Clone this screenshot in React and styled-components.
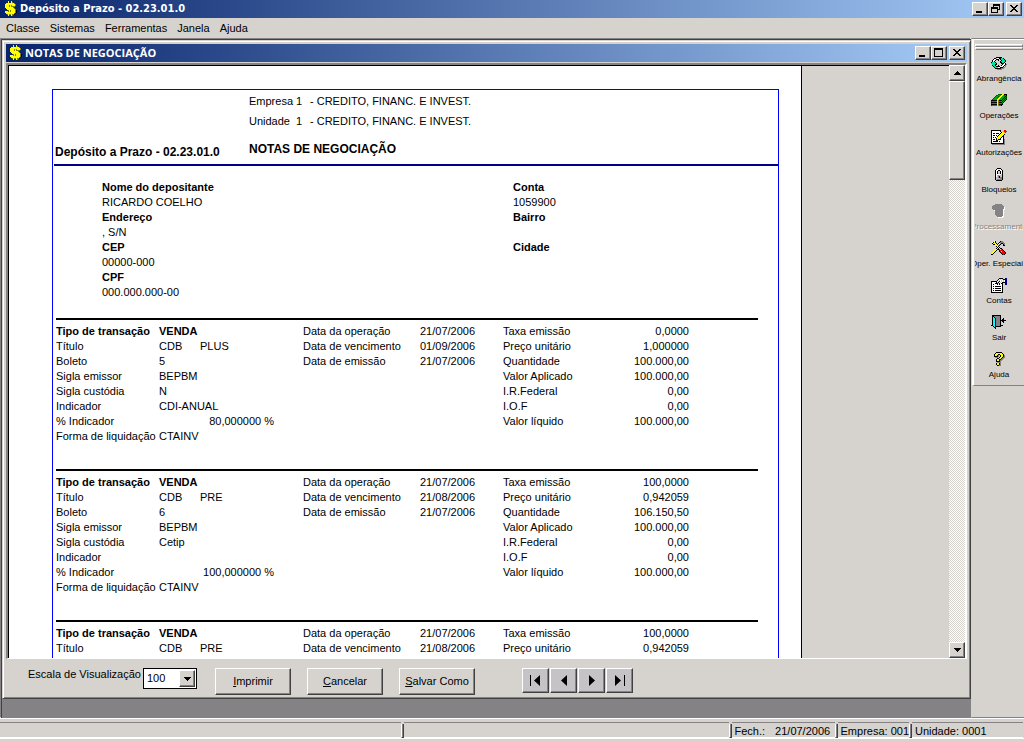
import React from "react";
import styled, { createGlobalStyle, css } from "styled-components";

const face = "#d6d3ce";
const shade = "#848284";
const dark = "#424142";

const GlobalStyle = createGlobalStyle`
  * { box-sizing: border-box; }
  body {
    margin: 0;
    background: ${face};
    color: #000;
    font: 11px/15px "Liberation Sans", Arial, sans-serif;
  }
  button, select { font: inherit; color: inherit; border-radius: 0; }
`;

const raised = css`
  background: ${face};
  border: 1px solid;
  border-color: #fff ${dark} ${dark} #fff;
  box-shadow: inset -1px -1px 0 ${shade};
`;

/* ---------- pixel drawings ---------- */

const palette = {
  K: "#000000", W: "#ffffff", Y: "#ffff00", y: "#848200", G: "#00a810",
  g: "#006100", C: "#00e3a6", c: "#00ffff", S: "#848284", s: "#c6c3c6",
  R: "#ff0000", B: "#000084", O: "#ffa030",
};

const drawings = {
  dollar: [
    "....Y..Y........",
    "....Y..Yy.......",
    "..YYYYYYYYy.....",
    ".YYYYYYYYYYy....",
    ".YYYYyYyYYYy....",
    ".YYYYyYyyyy.....",
    ".YYYYYYYYy......",
    "..YYYYYYYYy.....",
    "...YYYYYYYYy....",
    "....yYyYYYYyK...",
    ".YYYyYyYYYYyK...",
    ".YYYYYYYYYYyK...",
    "..YYYYYYYYyK....",
    "...yYyyYyyK.....",
    "....Y..Yy.......",
    "................",
  ],
  cycle: [
    "................",
    "................",
    ".....KKKKKK.....",
    "...KKsWWKKCCK...",
    "..KWWKKK.KCCCK..",
    ".KWWK..K..KCCCK.",
    ".KWK.....KCCCCK.",
    "KCCCK....KKCCK..",
    "CCCCCK....KKKWK.",
    ".CCCKK.....KWWKS",
    ".KCCK..K..KWWKS.",
    "..KCCKKKKWWWK.S.",
    "...KCCCWWKKKSS..",
    "....KKKKKKSSS...",
    "......SSSSS.....",
    "................",
  ],
  money: [
    "................",
    "................",
    ".......ggggYYKKK",
    ".....ggGGGYYGgGK",
    "....gGGgGYYGGGKg",
    "...gGGgGYYGGGKGK",
    "..gGGGGYYGGGKGKg",
    ".gGGGGYYGGGKGKGK",
    "KKKKKKYyKKKGKGK.",
    "gGGGGGYyGGGKGK..",
    "KKKKKKYyKKKGK...",
    "gGGGGGYyGGGK....",
    "KKKKKKYyKKKK....",
    "gGGGGGYyGGK.....",
    "................",
    "................",
  ],
  note: [
    "................",
    "KKKKKKKKKK...RR.",
    "KWWWWWWWWK..ORRR",
    "KWWWWWWWWWKYYOR.",
    "KWKKWKKKWKYYYY..",
    "KWWWWWWWKYYYYK..",
    "KWKKWKWKYYYYK...",
    "KWWWWWKYYYYKK...",
    "KWKWKWYYYYKWK...",
    "KWWWWKYYYKWWK...",
    "KWKKWKYKKKWWKS..",
    "KWWWWKKWWWWWKS..",
    "KWKKKKKWKWWWKS..",
    "KWWWWWWWWWWWKS..",
    "KKKKKKKKKKKKKS..",
    ".SSSSSSSSSSSSS..",
  ],
  lock: [
    "................",
    "................",
    "......KKKK......",
    ".....KWWWWK.....",
    "....KWWKKWWK....",
    "....KWK..KWK....",
    "....KWK..KWK....",
    "....KWKssKWK....",
    "....KWWWWWsK....",
    "....KWsSsssK....",
    "....KWsSKssK....",
    "....KssSKSSK....",
    "....KssssSSK....",
    "....KsSSSSSK....",
    ".....KKKKKK.....",
    "................",
  ],
  process: [
    "................",
    "....SSSSSSS.....",
    "..SSSSSSSSSS....",
    ".SSSSSSSSSSSS...",
    ".SSSSSSSSSSSSW..",
    ".SSSSSSSSSSSSW..",
    "..SSSSSSSSSSWW..",
    "...WSSSSSSSSW...",
    "....SSSSSSSSW...",
    "....SSSSSSSSW...",
    "....SSSSSSSSW...",
    "....SSSSSSSSW...",
    ".....SSSSSSSW...",
    "......SSSSSWW...",
    ".......WWWWW....",
    "................",
  ],
  tools: [
    "................",
    "...WK....KSS....",
    ".WKYK...KSSSS...",
    ".KYYYK.KWSKKSS..",
    "..KKYYKWSK..KS..",
    "....YYYSK...KK..",
    ".....KYK........",
    "......KYK.......",
    ".....KYKYKK.....",
    "....YYKKRYRK....",
    "...YYK..KRRRK...",
    "..YYK...KRYRRK..",
    ".YYK.....KRRRRK.",
    ".YK.......KRRRK.",
    "KK.........KRK..",
    "................",
  ],
  account: [
    "................",
    "........KKKK..BB",
    ".......KWsWsKKBB",
    "......KWsWsWsWBB",
    "KKKKKKWsKWsWsWBB",
    "KWWWWKsKWsWKKKBB",
    "KWWWKKKsKWKK..BB",
    "KWKWWWKWKWWK..BB",
    "KWWWWWWWWWWK....",
    "KWKWKKKKKKWK....",
    "KWWWWWWWWWWK....",
    "KWKWKKKKKKWK....",
    "KWWWWWWWWWWK....",
    "KWKWKKKKKKWK....",
    "KWWWWWWWWWWK....",
    "KKKKKKKKKKKK....",
  ],
  exit: [
    "................",
    ".KKKKKKKKK......",
    ".KKSSSSSSK......",
    ".KcKSSSSSK......",
    ".KccKSSSSK..K...",
    ".KccKSSSSK.KK...",
    ".KccKSSSSKKKKKK.",
    ".KccKSSSSK.KK...",
    ".KccKSSSSK..K...",
    ".KccKSSSSK......",
    ".KccKSSSSK......",
    "KKccKSSSSKKK....",
    "..KcKKKKKK......",
    "...KK...........",
    "....K...........",
    "................",
  ],
  help: [
    "................",
    ".....KKKKKK.....",
    "....KYYYYYYK....",
    "...KYYYKKYYYK...",
    "...KYYKS.KYYKS..",
    "...KKKKS.KYYKS..",
    "....SSS.KYYKSS..",
    "......KKYYKSS...",
    ".....KYYKKSS....",
    ".....KYYKSS.....",
    ".....KKKKS......",
    "......SSSS......",
    ".....KYYKS......",
    ".....KYYKS......",
    "......KKSS......",
    "................",
  ],
};

const PixelSvg = styled.svg`
  display: block;
  flex: none;
  width: 16px;
  height: 16px;
  shape-rendering: crispEdges;
`;

function PixelIcon({ name }) {
  return (
    <PixelSvg viewBox="0 0 16 16" aria-hidden="true">
      {drawings[name].flatMap((row, y) =>
        [...row.matchAll(/([A-Za-z])\1*/g)].map((run) => (
          <rect
            key={`${y}-${run.index}`}
            x={run.index}
            y={y}
            width={run[0].length}
            height="1"
            fill={palette[run[1]]}
          />
        ))
      )}
    </PixelSvg>
  );
}

/* ---------- frame of the application ---------- */

const Desktop = styled.div`
  display: flex;
  flex-direction: column;
  height: 100vh;
  overflow: hidden;
`;

const TitleBar = styled.header`
  display: flex;
  align-items: center;
  flex: none;
  height: 18px;
  padding: 0 2px 0 ${(p) => (p.$inner ? 3 : 4)}px;
  background: linear-gradient(90deg, #08246b, #a5cbf7);
`;

const Caption = styled.h1`
  flex: 1;
  margin: 0;
  color: #fff;
  font: bold 11px/18px ${(p) => (p.$inner ? '"Open Sans"' : '"DejaVu Sans Condensed"')}, sans-serif;
  white-space: nowrap;
`;

const CaptionButton = styled.button`
  ${raised}
  display: block;
  width: 16px;
  height: 14px;
  padding: 0;
  margin-left: ${(p) => (p.$apart ? 2 : 0)}px;
`;

const Glyph = styled.svg`
  display: block;
  width: 14px;
  height: 12px;
  fill: none;
  stroke: #000;
  shape-rendering: crispEdges;
`;

function CaptionButtons({ restore }) {
  return (
    <>
      <CaptionButton aria-label="Minimizar">
        <Glyph viewBox="0 0 14 12"><path d="M3 9h6" strokeWidth="2" /></Glyph>
      </CaptionButton>
      <CaptionButton aria-label={restore ? "Restaurar" : "Maximizar"}>
        <Glyph viewBox="0 0 14 12">
          {restore ? (
            <path d="M4.5 4V1.5h6v5H9M4 2h7M2.5 4.500h6v5h-6zM2 5h7" />
          ) : (
            <path d="M2.500 1.500h8v8h-8zM2 2.500h9" />
          )}
        </Glyph>
      </CaptionButton>
      <CaptionButton $apart aria-label="Fechar">
        <Glyph viewBox="0 0 14 12">
          <path d="M3 2h2v1h1v1h2v-1h1v-1h2v1h-1v1h-1v1h-1v1h1v1h1v1h1v1h-2v-1h-1v-1h-2v1h-1v1h-2v-1h1v-1h1v-1h1v-1h-1v-1h-1v-1h-1z" fill="#000" stroke="none" />
        </Glyph>
      </CaptionButton>
    </>
  );
}

const MenuBar = styled.nav`
  display: flex;
  flex: none;
  gap: 10px;
  height: 20px;
  padding-left: 6px;
`;

const MenuItem = styled.button`
  padding: 0;
  border: 0;
  background: none;
  line-height: 20px;
`;

const Middle = styled.div`
  display: flex;
  flex: 1;
  min-height: 0;
`;

const Workspace = styled.main`
  display: flex;
  flex: 1;
  min-width: 0;
  padding-bottom: 19px;
  background: ${shade};
  border: solid ${dark};
  border-width: 1px 0 0 1px;
  box-shadow: -1px -1px 0 ${shade};
  margin: 1px 0 0 1px;
`;

const ChildWindow = styled.section`
  display: flex;
  flex: 1;
  flex-direction: column;
  min-width: 0;
  padding: 2px;
  background: ${face};
  border: 1px solid;
  border-color: ${face} ${dark} ${dark} ${face};
  box-shadow: inset 1px 1px 0 #fff, inset -1px -1px 0 ${shade};
`;

const WindowBody = styled.div`
  display: flex;
  flex: 1;
  flex-direction: column;
  min-height: 0;
  padding: 1px 1px 0;
`;

const Viewer = styled.div`
  display: flex;
  flex: 1;
  min-height: 0;
  margin-top: 1px;
  border: 2px solid;
  border-color: ${shade} #fff #fff ${shade};
  border-bottom-width: 1px;
`;

const PageArea = styled.div`
  flex: 1;
  min-width: 0;
  overflow: hidden;
  border: solid #000;
  border-width: 1px 0 0 1px;
`;

/* ---------- scroll bar ---------- */

const ScrollBar = styled.div`
  display: flex;
  flex: none;
  flex-direction: column;
  width: 16px;
  background: repeating-conic-gradient(#fff 0 25%, ${face} 0 50%) 0 0 / 2px 2px;
`;

const ScrollButton = styled.button`
  ${raised}
  flex: none;
  width: 16px;
  height: 16px;
  padding: 0;
  svg { display: block; margin: auto; }
`;

const Thumb = styled.div`
  ${raised}
  flex: none;
  height: 99px;
`;

const Spring = styled.div`
  flex: 1;
`;

const Triangle = ({ up }) => (
  <svg width="7" height="4" shapeRendering="crispEdges" aria-hidden="true">
    <path d={up ? "M3 0h1v1h1v1h1v1h1v1H0V3h1V2h1V1h1z" : "M0 0h7v1H6v1H5v1H4v1H3V3H2V2H1V1H0z"} />
  </svg>
);

/* ---------- report ---------- */

const Paper = styled.article`
  width: 793px;
  padding: 23px 22px 0 43px;
  background: #fff;
  border-right: 1px solid #000;
`;

const Frame = styled.div`
  min-height: 900px;
  border: 1px solid #0000ff;
`;

const ReportHeader = styled.header`
  display: grid;
  grid-template-columns: 194px 1fr;
  height: 76px;
  margin-left: 1px;
  padding: 1px 0 2px 1px;
  border-bottom: 2px solid #000084;
  line-height: 20px;
`;

const ReportName = styled.h2`
  align-self: end;
  margin: 0;
  font-size: 12px;
  line-height: 20px;
`;

const ReportTitle = styled.h2`
  margin: 8px 0 0;
  font-size: 12px;
  line-height: 20px;
`;

const Entity = styled.div`
  display: grid;
  grid-template-columns: 47px 14px 1fr;
`;

const Depositor = styled.div`
  display: grid;
  grid-template-columns: 411px 1fr;
  padding: 14px 0 18px 49px;
`;

const Details = styled.dl`
  margin: 0;
  dt { font-weight: bold; }
  dd { margin: 0; min-height: 15px; }
`;

const Block = styled.table`
  width: 702px;
  margin: 0 0 25px 3px;
  border-top: 2px solid #000;
  border-collapse: separate;
  border-spacing: 0;
  table-layout: fixed;
  th, td {
    height: 15px;
    padding: 0;
    font-weight: normal;
    text-align: left;
    white-space: pre;
  }
`;

const Gap = styled.td`
  && { height: 4px; }
`;

const StrongHead = styled.th`
  && { font-weight: bold; }
`;

const StrongCell = styled.td`
  && { font-weight: bold; }
`;

const Amount = styled.td`
  && { text-align: right; }
`;

const Percent = styled.td`
  && { padding-right: 29px; text-align: right; }
`;

const Code = styled.span`
  display: inline-block;
  width: 41px;
`;

function Transaction({ data }) {
  const left = [
    ["Título", <><Code>CDB</Code>{data.kind}</>],
    ["Boleto", data.slip],
    ["Sigla emissor", "BEPBM"],
    ["Sigla custódia", data.custody],
    ["Indicador", data.index],
  ].slice(0, data.partial ? 1 : 5);
  const dates = [["Data de vencimento", data.due], ["Data de emissão", "21/07/2006"]];
  const right = [
    ["Preço unitário", data.price],
    ["Quantidade", data.quantity],
    ["Valor Aplicado", "100.000,00"],
    ["I.R.Federal", "0,00"],
    ["I.O.F", "0,00"],
    ["Valor líquido", "100.000,00"],
  ];
  return (
    <Block>
      <colgroup>
        <col width="103" /><col width="144" /><col width="117" />
        <col width="83" /><col width="116" /><col width="70" /><col />
      </colgroup>
      <tbody>
        <tr aria-hidden="true"><Gap colSpan="7" /></tr>
        <tr>
          <StrongHead scope="row">Tipo de transação</StrongHead>
          <StrongCell>VENDA</StrongCell>
          <th scope="row">Data da operação</th>
          <td>21/07/2006</td>
          <th scope="row">Taxa emissão</th>
          <Amount>{data.rate}</Amount>
          <td />
        </tr>
        {left.map(([label, value], i) => (
          <tr key={label}>
            <th scope="row">{label}</th>
            <td>{value}</td>
            {dates[i] ? <th scope="row">{dates[i][0]}</th> : <td />}
            <td>{dates[i] && dates[i][1]}</td>
            <th scope="row">{right[i][0]}</th>
            <Amount>{right[i][1]}</Amount>
            <td />
          </tr>
        ))}
        {!data.partial && (
          <>
            <tr>
              <th scope="row">% Indicador</th>
              <Percent>{data.percent} %</Percent>
              <td />
              <td />
              <th scope="row">{right[5][0]}</th>
              <Amount>{right[5][1]}</Amount>
              <td />
            </tr>
            <tr>
              <th scope="row">Forma de liquidação</th>
              <td>CTAINV</td>
              <td colSpan="5" />
            </tr>
          </>
        )}
      </tbody>
    </Block>
  );
}

const transactions = [
  { kind: "PLUS", slip: "5", custody: "N", index: "CDI-ANUAL", percent: "80,000000", due: "01/09/2006", rate: "0,0000", price: "1,000000", quantity: "100.000,00" },
  { kind: "PRE", slip: "6", custody: "Cetip", index: "", percent: "100,000000", due: "21/08/2006", rate: "100,0000", price: "0,942059", quantity: "106.150,50" },
  { kind: "PRE", partial: true, due: "21/08/2006", rate: "100,0000", price: "0,942059" },
];

/* ---------- command bar ---------- */

const CommandBar = styled.div`
  display: flex;
  flex: none;
  align-items: flex-start;
  height: 37px;
  padding: 9px 0 0 22px;
`;

const ScaleLabel = styled.label`
  width: 115px;
  margin-top: -1px;
  white-space: nowrap;
`;

const Combo = styled.div`
  position: relative;
  width: 54px;
  margin-right: 18px;
`;

const Select = styled.select`
  display: block;
  width: 100%;
  height: 21px;
  padding: 0 0 0 3px;
  appearance: none;
  background: #fff;
  border: 1px solid #000;
`;

const ComboArrow = styled.span`
  ${raised}
  position: absolute;
  top: 2px;
  right: 2px;
  display: grid;
  place-items: center;
  width: 16px;
  height: 17px;
  pointer-events: none;
`;

const PushButton = styled.button`
  ${raised}
  width: 76px;
  height: 27px;
  padding: 0;
  margin-right: 16px;
`;

const Pager = styled.div`
  display: flex;
  gap: 1px;
  margin-left: 31px;
`;

const PagerButton = styled.button`
  ${raised}
  width: 27px;
  height: 25px;
  padding: 0 0 1px;
  background: #c6c3c6;
  svg { display: block; margin: auto; }
`;

const pages = [
  ["Primeira página", "M1 1h1v11H1zM11 1v11L5 6.500z"],
  ["Página anterior", "M10 1v11L4 6.500z"],
  ["Próxima página", "M4 1v11l6-5.500z"],
  ["Última página", "M2 1v11l6-5.500zM11 1h1v11h-1z"],
];

/* ---------- side tool bar ---------- */

const SideBar = styled.aside`
  flex: none;
  width: 53px;
  border-top: 1px solid ${shade};
  border-left: 1px solid ${face};
  border-bottom: 1px solid ${shade};
`;

const ToolPanel = styled.div`
  padding: 4px 1px 2px;
  border: solid #fff;
  border-width: 1px 0 0 2px;
  border-bottom: 1px solid ${shade};
`;

const Grip = styled.div`
  height: 3px;
  border: 1px solid;
  border-color: #fff ${shade} ${shade} #fff;
`;

const Tool = styled.button`
  display: flex;
  flex-direction: column;
  align-items: center;
  gap: 3px;
  width: 100%;
  height: 37px;
  padding: 5px 0 0;
  overflow: hidden;
  background: none;
  border: 0;
  font-size: 8px;
  line-height: 10px;
  white-space: nowrap;
  &:disabled { color: ${shade}; text-shadow: 1px 1px 0 #fff; }
`;

const tools = [
  ["cycle", "Abrangência"],
  ["money", "Operações"],
  ["note", "Autorizações"],
  ["lock", "Bloqueios"],
  ["process", "Processamento"],
  ["tools", "Oper. Especiais"],
  ["account", "Contas"],
  ["exit", "Sair"],
  ["help", "Ajuda"],
];

/* ---------- status bar ---------- */

const StatusBar = styled.footer`
  display: flex;
  flex: none;
  height: 24px;
  padding: 3px 1px 4px 0;
  border-top: 1px solid #fff;
  box-shadow: inset 0 -3px 0 ${face}, inset 0 -4px 0 #fff;
`;

const StatusPanel = styled.div`
  display: flex;
  flex: ${(p) => (p.$width ? `0 0 ${p.$width}px` : "1")};
  gap: 10px;
  padding: 1px 0 0 3px;
  border: solid ${shade};
  border-width: 1px 0 0;
  border-bottom: 1px solid #fff;
  white-space: nowrap;
`;

const Divider = styled.div`
  flex: none;
  width: 3px;
  margin-top: 2px;
  background: ${shade};
  border: solid;
  border-width: 0 1px 1px;
  border-color: #fff ${dark} ${dark} #fff;
`;

export default function App() {
  return (
    <Desktop>
      <GlobalStyle />
      <TitleBar>
        <PixelIcon name="dollar" />
        <Caption>Depósito a Prazo - 02.23.01.0</Caption>
        <CaptionButtons restore />
      </TitleBar>
      <MenuBar aria-label="Menu">
        {["Classe", "Sistemas", "Ferramentas", "Janela", "Ajuda"].map((m) => (
          <MenuItem key={m}>{m}</MenuItem>
        ))}
      </MenuBar>
      <Middle>
        <Workspace>
          <ChildWindow>
            <WindowBody>
              <TitleBar $inner>
                <PixelIcon name="dollar" />
                <Caption as="h2" $inner>NOTAS DE NEGOCIAÇÃO</Caption>
                <CaptionButtons />
              </TitleBar>
              <Viewer>
                <PageArea>
                  <Paper>
                    <Frame>
                      <ReportHeader>
                        <ReportName>Depósito a Prazo - 02.23.01.0</ReportName>
                        <div>
                          <Entity><span>Empresa</span><span>1</span><span>- CREDITO, FINANC. E INVEST.</span></Entity>
                          <Entity><span>Unidade</span><span>1</span><span>- CREDITO, FINANC. E INVEST.</span></Entity>
                          <ReportTitle>NOTAS DE NEGOCIAÇÃO</ReportTitle>
                        </div>
                      </ReportHeader>
                      <Depositor>
                        <Details>
                          <dt>Nome do depositante</dt><dd>RICARDO COELHO</dd>
                          <dt>Endereço</dt><dd>, S/N</dd>
                          <dt>CEP</dt><dd>00000-000</dd>
                          <dt>CPF</dt><dd>000.000.000-00</dd>
                        </Details>
                        <Details>
                          <dt>Conta</dt><dd>1059900</dd>
                          <dt>Bairro</dt><dd />
                          <dt>Cidade</dt><dd />
                        </Details>
                      </Depositor>
                      {transactions.map((t, i) => <Transaction key={i} data={t} />)}
                    </Frame>
                  </Paper>
                </PageArea>
                <ScrollBar>
                  <ScrollButton aria-label="Rolar para cima"><Triangle up /></ScrollButton>
                  <Thumb />
                  <Spring />
                  <ScrollButton aria-label="Rolar para baixo"><Triangle /></ScrollButton>
                </ScrollBar>
              </Viewer>
              <CommandBar>
                <ScaleLabel htmlFor="scale">Escala de Visualização</ScaleLabel>
                <Combo>
                  <Select id="scale" defaultValue="100"><option>50</option><option>100</option><option>150</option></Select>
                  <ComboArrow><Triangle /></ComboArrow>
                </Combo>
                <PushButton><u>I</u>mprimir</PushButton>
                <PushButton><u>C</u>ancelar</PushButton>
                <PushButton><u>S</u>alvar Como</PushButton>
                <Pager>
                  {pages.map(([label, d]) => (
                    <PagerButton key={label} aria-label={label}>
                      <svg width="13" height="13" aria-hidden="true"><path d={d} /></svg>
                    </PagerButton>
                  ))}
                </Pager>
              </CommandBar>
            </WindowBody>
          </ChildWindow>
        </Workspace>
        <SideBar>
          <ToolPanel>
            <Grip />
            <Grip />
            {tools.map(([icon, label]) => (
              <Tool key={icon} disabled={icon === "process"}>
                <PixelIcon name={icon} />
                <span>{label}</span>
              </Tool>
            ))}
          </ToolPanel>
        </SideBar>
      </Middle>
      <StatusBar>
        <StatusPanel $width={401} />
        <Divider />
        <StatusPanel />
        <Divider />
        <StatusPanel $width={103}><span>Fech.:</span><span>21/07/2006</span></StatusPanel>
        <Divider />
        <StatusPanel $width={71}>Empresa: 001</StatusPanel>
        <Divider />
        <StatusPanel $width={111}>Unidade: 0001</StatusPanel>
      </StatusBar>
    </Desktop>
  );
}
